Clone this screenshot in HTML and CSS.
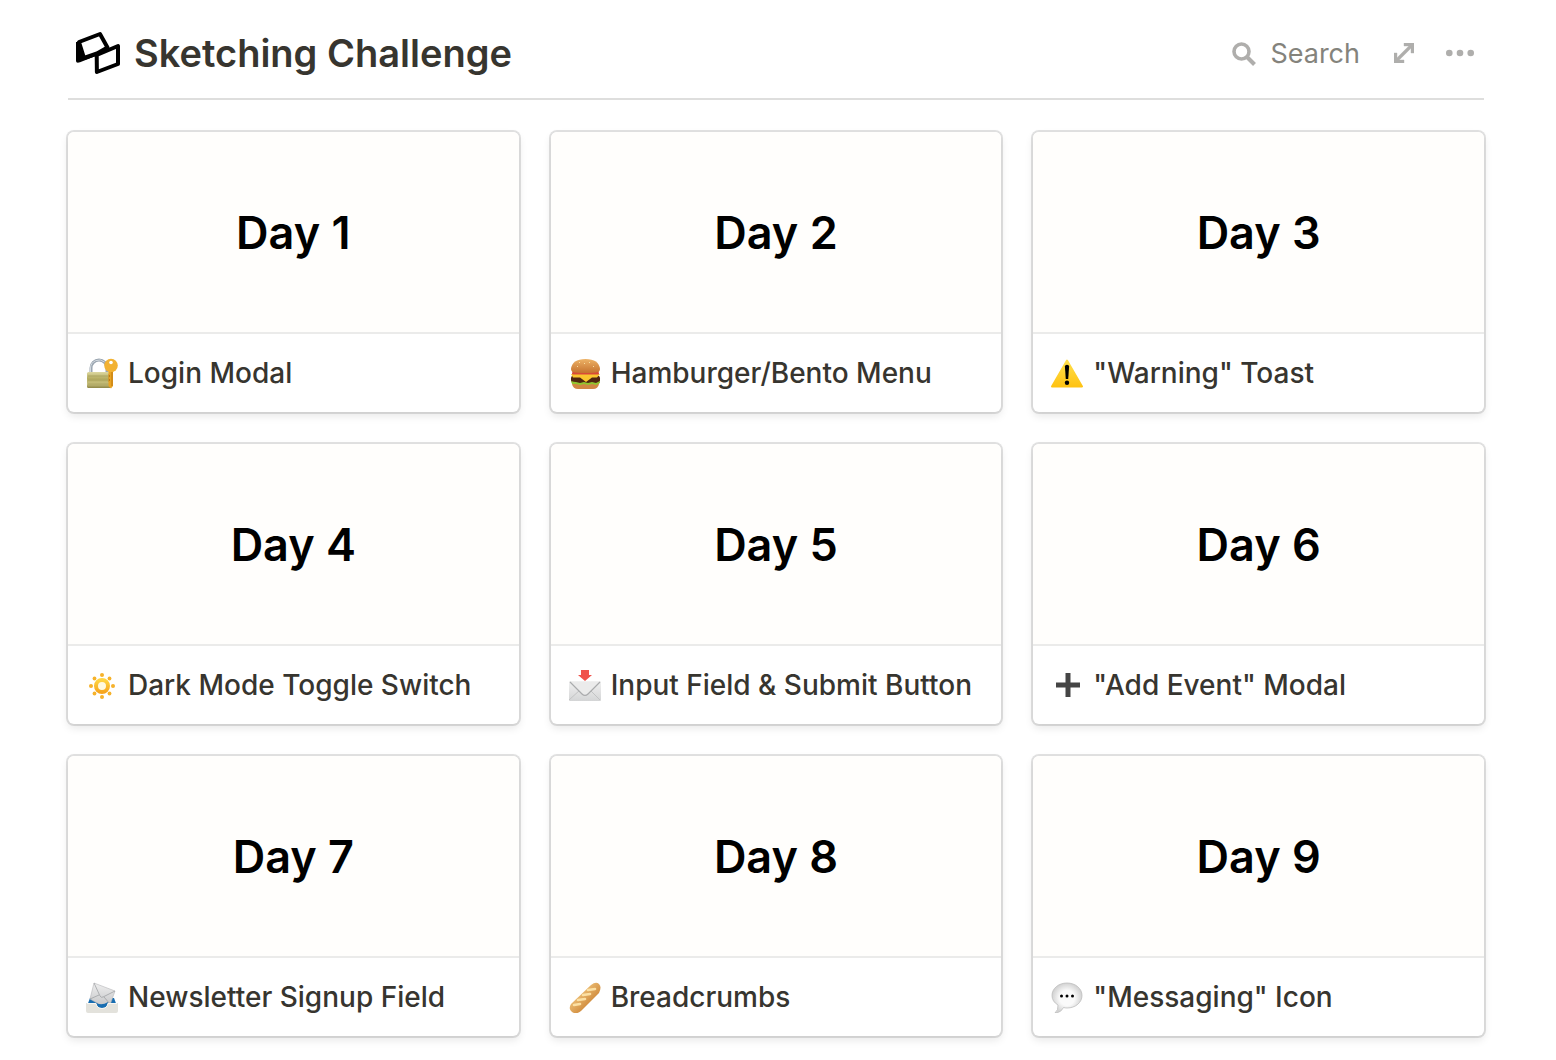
FILE: index.html
```html
<!DOCTYPE html>
<html lang="en">
<head>
<meta charset="utf-8">
<meta name="viewport" content="width=device-width, initial-scale=1">
<title>Sketching Challenge</title>
<link rel="stylesheet" href="styles.css">
</head>
<body>
<header class="topbar">
  <svg class="logo" viewBox="0 0 44 42" aria-hidden="true">
    <path d="M0 10V29Q0 31.500 4 30.300L21 23.500V19L8 23 4 10Z" fill="#000"/>
    <path d="M3 10 24 2 31.500 15.500 21 21.500 8 26Z" fill="#fff" stroke="#000" stroke-width="4" stroke-linejoin="round"/>
    <path d="M20.700 23 42 14V32L20.900 40Z" fill="#fff" stroke="#000" stroke-width="4" stroke-linejoin="round"/>
  </svg>
  <h1 class="title">Sketching Challenge</h1>
  <div class="actions">
    <button class="search" type="button">
      <svg class="search-icon" viewBox="0 0 24 24" aria-hidden="true"><circle cx="9.500" cy="9.500" r="7.500" fill="none" stroke="#afaeac" stroke-width="3.600"/><path d="m14.500 14.500 8 8" stroke="#afaeac" stroke-width="4"/></svg>
      <span>Search</span>
    </button>
    <button class="icon-button" type="button" aria-label="Expand">
      <svg class="expand-icon" viewBox="0 0 20 20" aria-hidden="true"><path d="M10 0H20V10H17V5.200L5.200 17H10V20H0V10H3V14.800L14.800 3H10Z" fill="#afaeac" stroke="#afaeac" stroke-width=".4"/></svg>
    </button>
    <button class="icon-button" type="button" aria-label="More">
      <svg class="more-icon" viewBox="0 0 28 8" aria-hidden="true"><g fill="#afaeac"><circle cx="3.300" cy="4" r="3.300"/><circle cx="14" cy="4" r="3.300"/><circle cx="24.700" cy="4" r="3.300"/></g></svg>
    </button>
  </div>
</header>
<main class="gallery">
  <a class="card" href="#day-1">
    <div class="cover">Day 1</div>
    <div class="label">
      <svg class="emoji" viewBox="0 0 32 32" aria-hidden="true">
        <defs><linearGradient id="brass" x2="0" y2="1"><stop stop-color="#ddd8a0"/><stop offset=".4" stop-color="#b5ad62"/><stop offset=".75" stop-color="#c8c07d"/><stop offset="1" stop-color="#8d8545"/></linearGradient></defs>
        <path d="M5 16V11a8 8 0 0 1 16 0v5" fill="none" stroke="#9aa5b0" stroke-width="3"/><path d="M4.500 15V11a8.500 8.500 0 0 1 14-6" fill="none" stroke="#d3dae0"/>
        <rect x="1" y="15" width="24" height="16" rx="1.500" fill="url(#brass)"/><path d="M2 19H24M2 23H24M2 27H24" stroke="#9c954f" stroke-width=".6"/>
        <path d="M22.500 13h4.500v16l-2 2.500-2.500-2.500Z" fill="#eaa321"/><circle cx="25" cy="8.500" r="6.800" fill="#f2b233"/><circle cx="25" cy="5.500" r="1.800" fill="#fff"/><path d="M26 15V29" stroke="#bb7610"/><path d="m22.500 18 1.500 1-1.500 1m0 2 1.500 1-1.500 1" fill="none" stroke="#bb7610"/>
      </svg>
      <span>Login Modal</span>
    </div>
  </a>
  <a class="card" href="#day-2">
    <div class="cover">Day 2</div>
    <div class="label">
      <svg class="emoji" viewBox="0 0 32 32" aria-hidden="true">
        <defs><linearGradient id="bun" x2="0" y2="1"><stop stop-color="#edb266"/><stop offset="1" stop-color="#c5722e"/></linearGradient></defs>
        <path d="M3 25H30v2q-1 5-6 5H9q-5 0-6-5Z" fill="#d08743"/><rect x="2" y="18.500" width="29" height="7.500" rx="3" fill="#502510"/><path d="M2 24q3 1 5 1l4 1 4-1 4 1 4-1 4 1 4-2v2l-4 2-4-1-4 1-4-1-4 1-4-1-4 0Z" fill="#90c52f"/><path d="M2 17H31L28 20.500H23L17 25 11 20.500H4Z" fill="#fbc52e"/><rect x="3" y="15" width="27" height="2.500" rx="1" fill="#d84a38"/><path d="M2 12Q3 2 16.500 2T31 12q0 3-4 3.500-10 1-21 0Q2 15 2 12Z" fill="url(#bun)"/><path d="m10 6 1-1m4 2 1-1m4-1 1 1m3 3 1 1M8 10l1-1" stroke="#f9dda0"/>
      </svg>
      <span>Hamburger/Bento Menu</span>
    </div>
  </a>
  <a class="card" href="#day-3">
    <div class="cover">Day 3</div>
    <div class="label">
      <svg class="emoji" viewBox="0 0 32 32" aria-hidden="true">
        <defs><linearGradient id="warning" x2="0" y2="1"><stop stop-color="#ffe04d"/><stop offset="1" stop-color="#ffc313"/></linearGradient></defs>
        <path d="M16 3.500 31 29.500H1Z" fill="url(#warning)" stroke="url(#warning)" stroke-width="2" stroke-linejoin="round"/><path d="M13.900 9.500q0-1.700 2.100-1.700T18.100 9.500L17.200 22H14.800Z"/><circle cx="16" cy="25.800" r="2.200"/>
      </svg>
      <span>"Warning" Toast</span>
    </div>
  </a>
  <a class="card" href="#day-4">
    <div class="cover">Day 4</div>
    <div class="label">
      <svg class="emoji" viewBox="0 0 32 32" aria-hidden="true">
        <defs><linearGradient id="sun" x2="0" y2="1"><stop stop-color="#ffd542"/><stop offset="1" stop-color="#f7a51d"/></linearGradient></defs>
        <circle cx="16" cy="17" r="6" fill="#fff9df" stroke="url(#sun)" stroke-width="4"/>
        <g fill="#f6b22b"><circle cx="16" cy="6" r="2"/><circle cx="16" cy="28" r="2"/><circle cx="5" cy="17" r="2"/><circle cx="27" cy="17" r="2"/><circle cx="8.500" cy="9.500" r="1.900"/><circle cx="23.500" cy="9.500" r="1.900"/><circle cx="8.500" cy="24.500" r="1.900"/><circle cx="23.500" cy="24.500" r="1.900"/></g>
      </svg>
      <span>Dark Mode Toggle Switch</span>
    </div>
  </a>
  <a class="card" href="#day-5">
    <div class="cover">Day 5</div>
    <div class="label">
      <svg class="emoji" viewBox="0 0 32 32" aria-hidden="true">
        <defs><linearGradient id="paper" x2="0" y2="1"><stop stop-color="#f1f1f1"/><stop offset="1" stop-color="#d4d5d6"/></linearGradient></defs>
        <rect x="0" y="12" width="32" height="20" rx="1" fill="url(#paper)"/><path d="m0 31 11-10m20 10L21 21" fill="none" stroke="#c2c3c4"/><path d="m1 13 12 12q3 3 6 0L31 13" fill="#ebebeb" stroke="#aaabad" stroke-width="1.200"/><path d="M12 1h8v5h3l-7 6-7-6h3Z" fill="#f0524b"/>
      </svg>
      <span>Input Field &amp; Submit Button</span>
    </div>
  </a>
  <a class="card" href="#day-6">
    <div class="cover">Day 6</div>
    <div class="label">
      <svg class="emoji" viewBox="0 0 32 32" aria-hidden="true"><path d="M14.500 4h5v9.500H29v5h-9.500V28h-5v-9.500H5v-5h9.500Z" fill="#454545"/></svg>
      <span>"Add Event" Modal</span>
    </div>
  </a>
  <a class="card" href="#day-7">
    <div class="cover">Day 7</div>
    <div class="label">
      <svg class="emoji" viewBox="0 0 32 32" aria-hidden="true">
        <defs><linearGradient id="letter" x2="0" y2="1"><stop stop-color="#efefef"/><stop offset="1" stop-color="#c3c4c6"/></linearGradient></defs>
        <path d="M4 17H28l3 8H1Z" fill="#176db1"/><path d="M8 2 29 10 24 24 18 26 4 18Z" fill="url(#letter)" stroke="#b5b6b8" stroke-width=".6"/><path d="m8 2 6 13q1 2 3 1L29 10M4 18l9-4m11 9-6-7" fill="none" stroke="#a0a2a5" stroke-width=".8"/><path d="M10 22q6 3 12-1l-1 6H11Z" fill="#176db1"/><path d="M0 22H10q1 5 6 5t6-5H32v8q0 2-2 2H2q-2 0-2-2Z" fill="#e3e2dc"/><path d="M1 22.500H10q1 5 6 5t6-5H31" fill="none" stroke="#f7f6f2"/>
      </svg>
      <span>Newsletter Signup Field</span>
    </div>
  </a>
  <a class="card" href="#day-8">
    <div class="cover">Day 8</div>
    <div class="label">
      <svg class="emoji" viewBox="0 0 32 32" aria-hidden="true">
        <defs><linearGradient id="crust" x2="1" y2="1"><stop offset=".2" stop-color="#f5cd85"/><stop offset=".8" stop-color="#c77b2b"/></linearGradient></defs>
        <path d="M2 23 22 4q5-4 8-1t0 9L12 30q-5 4-9 1t-1-8Z" fill="url(#crust)"/><path d="m5 24 6-1m-2-4 7-1m-2-4 7-1m-2-4 7-1" stroke="#fbe0a4" stroke-width="2.600" stroke-linecap="round"/>
      </svg>
      <span>Breadcrumbs</span>
    </div>
  </a>
  <a class="card" href="#day-9">
    <div class="cover">Day 9</div>
    <div class="label">
      <svg class="emoji" viewBox="0 0 32 32" aria-hidden="true">
        <defs><radialGradient id="bubble"><stop offset=".5" stop-color="#fafafa"/><stop offset="1" stop-color="#d2d2d2"/></radialGradient></defs>
        <path d="M16 2C7.500 2 1 7.500 1 14.500q0 6 6 9.500.500 5-3 8 6-.500 8.500-5.500 2 .500 3.500.500c8.500 0 15-5.500 15-12.500S24.500 2 16 2Z" fill="url(#bubble)" stroke="#bcbcbc" stroke-width=".800"/><circle cx="10.500" cy="15" r="1.500"/><circle cx="16" cy="15" r="1.500"/><circle cx="21.500" cy="15" r="1.500"/>
      </svg>
      <span>"Messaging" Icon</span>
    </div>
  </a>
</main>
</body>
</html>
```
FILE: styles.css
```css
* {
  box-sizing: border-box;
}

body {
  margin: 0;
  padding: 8px 72px 24px 68px;
  background: #fff;
  color: #37352f;
  font-family: Inter, "Liberation Sans", sans-serif;
}

.topbar {
  display: flex;
  align-items: center;
  height: 92px;
  padding: 0 10px 0 8px;
  border-bottom: 2px solid #dededd;
}

.logo {
  width: 44px;
  height: 42px;
  margin-right: 14px;
  overflow: visible;
}

.title {
  margin: 0;
  font-size: 38px;
  line-height: 48px;
  font-weight: 600;
}

.actions {
  display: flex;
  align-items: center;
  gap: 32px;
  margin-left: auto;
}

.search,
.icon-button {
  display: flex;
  align-items: center;
  padding: 0;
  border: 0;
  background: none;
  color: #84837c;
  font: inherit;
  cursor: pointer;
}

.search {
  gap: 14px;
  padding: 2px 2px 0 0;
  font-size: 27px;
  line-height: 36px;
}

.search-icon {
  width: 24px;
  height: 24px;
}

.expand-icon {
  width: 20px;
  height: 20px;
}

.more-icon {
  width: 28px;
  height: 8px;
}

.gallery {
  display: grid;
  grid-template-columns: repeat(3, 1fr);
  gap: 32px;
  padding-top: 32px;
}

.card {
  overflow: hidden;
  border-radius: 6px;
  background: #fff;
  box-shadow: 0 0 0 2px rgba(15, 15, 15, 0.12), 0 4px 8px rgba(15, 15, 15, 0.1);
  color: inherit;
  text-decoration: none;
}

.cover {
  display: flex;
  align-items: center;
  justify-content: center;
  height: 202px;
  border-bottom: 2px solid #ebebea;
  background: #fffefc;
  color: #000;
  font-size: 45px;
  font-weight: 600;
}

.label {
  display: flex;
  align-items: center;
  gap: 10px;
  height: 78px;
  padding: 0 18px;
  font-size: 28px;
  line-height: 36px;
  font-weight: 500;
  white-space: nowrap;
}

.emoji {
  flex: none;
  width: 32px;
  height: 32px;
}
```
